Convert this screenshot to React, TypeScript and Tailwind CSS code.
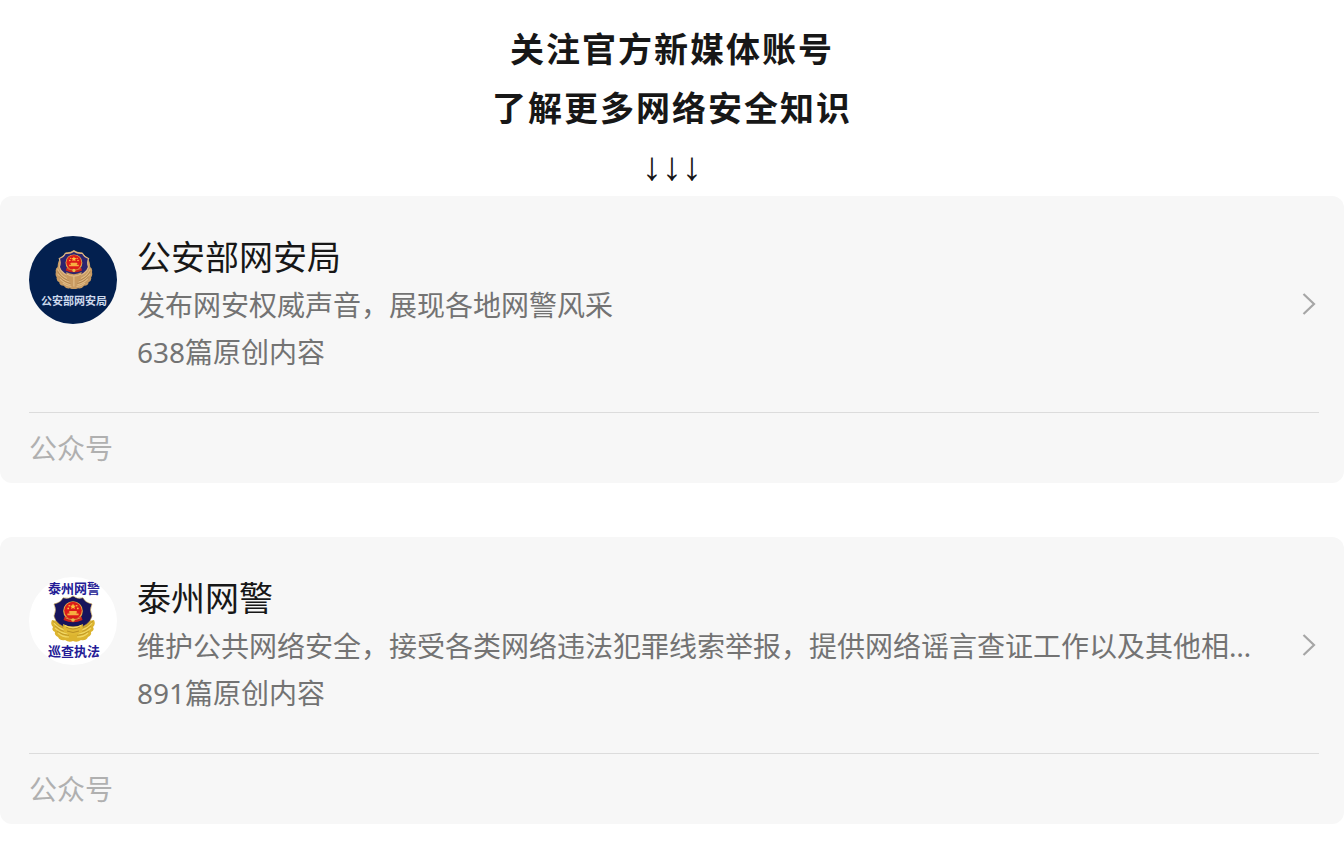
import type { ReactNode } from 'react';

interface Account {
  id: string;
  name: string;
  description: string;
  articles: number;
  avatar: ReactNode;
}

function StateEmblem() {
  return (
    <g>
      <circle cx="22" cy="15" r="9.8" fill="#e6b24a" />
      <circle cx="22" cy="14.6" r="8.8" fill="#dc1c1a" />
      <path d="M22 7.6l.9 1.9 2.1.2-1.6 1.4.5 2-1.9-1-1.9 1 .5-2-1.6-1.4 2.1-.2z" fill="#ffc23d" />
      <circle cx="17.2" cy="12.4" r=".9" fill="#ffc23d" />
      <circle cx="26.8" cy="12.4" r=".9" fill="#ffc23d" />
      <circle cx="18.2" cy="9.8" r=".8" fill="#ffc23d" />
      <circle cx="25.8" cy="9.8" r=".8" fill="#ffc23d" />
      <path d="M18.6 15h6.8l1 1.4h-1v1h2.2v1.8H16.4v-1.8h2.2v-1h-1z" fill="#f6b040" />
      <path d="M13.5 20.5q8.5 4 17 0l1 3.5q-9.5 4.5-19 0z" fill="#c8201c" />
      <path d="M14.5 21.8q7.5 3.6 15 0" fill="none" stroke="#e8a840" strokeWidth=".9" />
      <circle cx="22" cy="24" r="1.8" fill="#e9bd4a" />
    </g>
  );
}

function MinistryAvatar() {
  return (
    <svg viewBox="0 0 88 88" className="size-full" role="img" aria-label="公安部网安局">
      <rect width="88" height="88" fill="#03204f" />
      <g transform="translate(26 14) scale(.86 .85)">
        <path
          d="M22 0Q26 3 31 2.6L37 9Q41 13 41 20Q44 22 43 26Q44 30 42 32Q43 36 39 38Q39 42 34 42Q31 46 27 45Q22 47 17 45Q13 46 10 42Q5 42 5 38Q1 36 2 32Q0 30 1 26Q0 22 3 20Q3 13 7 9L13 2.6Q18 3 22 0z"
          fill="#c89a62"
        />
        <path
          d="M3 22Q6 31 17 35M3 28Q8 35 17 38M6 34Q10 39 18 41M9 39Q14 43 19 43M41 22Q38 31 27 35M41 28Q36 35 27 38M38 34Q34 39 26 41M35 39Q30 43 25 43"
          fill="none"
          stroke="#e0bb86"
          strokeWidth="1.2"
        />
        <path
          d="M3 25Q7 33 17 36.5M5 31Q9 37 18 39.5M41 25Q37 33 27 36.5M39 31Q35 37 26 39.5"
          fill="none"
          stroke="#a0733f"
          strokeWidth=".6"
        />
        <path
          d="M22 1.4Q26 4.6 32 4Q33.5 8 39 10Q37 15 39 20Q37 28 22 33Q7 28 5 20Q7 15 5 10Q10.5 8 12 4Q18 4.6 22 1.4z"
          fill="#2b2470"
          stroke="#ddb683"
          strokeWidth="1.4"
        />
        <StateEmblem />
        <path d="M13 26Q22 31 31 26L30 35Q22 40 14 35z" fill="#c9995f" />
        <path d="M14 28.5Q22 33 30 28.5M22 31v12" fill="none" stroke="#ecca98" strokeWidth="1" />
      </g>
      <text
        x="45"
        y="69"
        textAnchor="middle"
        fill="#ccd8ec"
        className="font-['Noto_Sans_CJK_SC',sans-serif] text-[11px] font-bold"
      >
        公安部网安局
      </text>
    </svg>
  );
}

function TaizhouAvatar() {
  return (
    <svg viewBox="0 0 88 88" className="size-full" role="img" aria-label="泰州网警 巡查执法">
      <rect width="88" height="88" fill="#ffffff" />
      <text
        x="45"
        y="16"
        textAnchor="middle"
        fill="#251c96"
        className="font-['Noto_Sans_CJK_SC',sans-serif] text-[13px] font-bold"
      >
        泰州网警
      </text>
      <g transform="translate(22 19)">
        <path
          d="M1 24Q5 24 8 27L22 32L36 27Q39 24 43 24Q45 28 42 31Q44 34 40 36Q41 39 37 41Q35 45 30 44Q26 47 22 45Q18 47 14 44Q9 45 7 41Q3 39 4 36Q0 34 2 31Q-1 28 1 24z"
          fill="#dcb42f"
        />
        <path
          d="M3 27Q8 33 16 35M4 32Q9 37 17 38M7 37Q11 41 18 41M41 27Q36 33 28 35M40 32Q35 37 27 38M37 37Q33 41 26 41"
          fill="none"
          stroke="#f0d663"
          strokeWidth="1.2"
        />
        <path
          d="M2 25Q7 31 15 33M4 30Q9 35 17 36.5M6 35Q11 39 18 39.5M42 25Q37 31 29 33M40 30Q35 35 27 36.5M38 35Q33 39 26 39.5"
          fill="none"
          stroke="#b08a24"
          strokeWidth=".6"
        />
        <path
          d="M22 0Q26 3.6 32 1.8Q34 6.5 41 8Q38 13.500 41 20Q39 30 22 34Q5 30 3 20Q6 13.500 3 8Q10 6.500 12 1.800Q18 3.600 22 0z"
          fill="#17145c"
          stroke="#c9a148"
          strokeWidth=".6"
        />
        <StateEmblem />
        <path d="M12 28Q22 33 32 28L31 36Q22 42 13 36z" fill="#e0b935" />
        <path d="M15 31Q22 35 29 31M16 35Q22 38 28 35" fill="none" stroke="#b0851f" strokeWidth=".8" />
        <path d="M14 29.5Q22 34 30 29.5" fill="none" stroke="#f7e27c" strokeWidth=".8" />
      </g>
      <text
        x="45"
        y="79"
        textAnchor="middle"
        fill="#251c96"
        className="font-['Noto_Sans_CJK_SC',sans-serif] text-[13px] font-bold"
      >
        巡查执法
      </text>
    </svg>
  );
}

const accounts: Account[] = [
  {
    id: 'ministry',
    name: '公安部网安局',
    description: '发布网安权威声音，展现各地网警风采',
    articles: 638,
    avatar: <MinistryAvatar />,
  },
  {
    id: 'taizhou',
    name: '泰州网警',
    description: '维护公共网络安全，接受各类网络违法犯罪线索举报，提供网络谣言查证工作以及其他相…',
    articles: 891,
    avatar: <TaizhouAvatar />,
  },
];

function AccountCard({ account }: { account: Account }) {
  return (
    <a href={`#${account.id}`} className="block rounded-xl bg-[#f7f7f7] pr-[25px] pl-[29px]">
      <div className="flex items-center border-b border-[#dcdcdc] pt-10 pb-9">
        <div className="flex min-w-0 flex-1 items-start gap-5">
          <div className="size-[88px] shrink-0 overflow-hidden rounded-full">{account.avatar}</div>
          <div className="min-w-0 flex-1">
            <h2 className="text-[34px] leading-[42px] text-[#171717]">{account.name}</h2>
            <p className="mt-1 truncate text-[28px] leading-[47px] text-[#737373]">{account.description}</p>
            <p className="text-[28px] leading-[47px] text-[#737373]">{account.articles}篇原创内容</p>
          </div>
        </div>
        <svg viewBox="0 0 14 24" className="mr-[3px] mb-1 ml-11 h-6 w-3.5 shrink-0" aria-hidden="true">
          <path d="M1.5 2L12 12L1.5 22" fill="none" stroke="#a6a6a6" strokeWidth="2.2" />
        </svg>
      </div>
      <p className="text-[28px] leading-[70px] text-[#b0b0b0]">公众号</p>
    </a>
  );
}

export default function App() {
  return (
    <main className="bg-white pt-5 font-['Noto_Sans','Noto_Sans_CJK_SC',sans-serif]">
      <h1 className="text-center text-[34px] leading-[59px] font-bold tracking-[2px] text-[#171717]">
        关注官方新媒体账号
        <br />
        了解更多网络安全知识
      </h1>
      <p className="text-center font-['Liberation_Serif',serif] text-[40px] leading-[58px] text-[#171717]">
        ↓↓↓
      </p>
      <div className="flex flex-col gap-[54px]">
        {accounts.map((account) => (
          <AccountCard key={account.id} account={account} />
        ))}
      </div>
    </main>
  );
}
